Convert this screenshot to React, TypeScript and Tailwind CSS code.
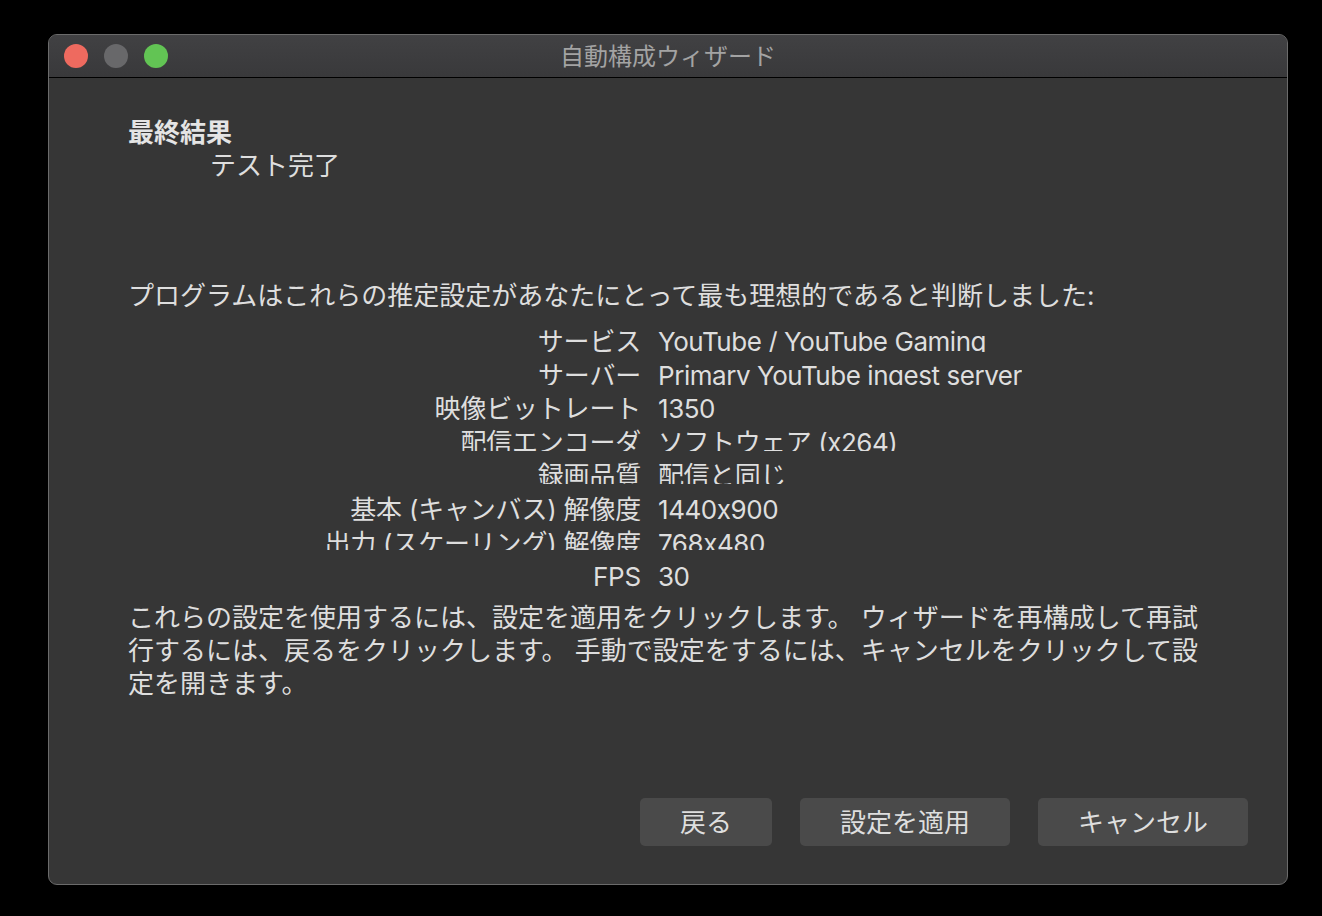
import React from "react";

const rows: { label: string; value: string; clip: number }[] = [
  { label: "サービス", value: "YouTube / YouTube Gaming", clip: 27 },
  { label: "サーバー", value: "Primary YouTube ingest server", clip: 26 },
  { label: "映像ビットレート", value: "1350", clip: 28 },
  { label: "配信エンコーダ", value: "ソフトウェア (x264)", clip: 25 },
  { label: "録画品質", value: "配信と同じ", clip: 25 },
  { label: "基本 (キャンバス) 解像度", value: "1440x900", clip: 28 },
  { label: "出力 (スケーリング) 解像度", value: "768x480", clip: 23 },
  { label: "FPS", value: "30", clip: 28 },
];

export default function App() {
  return (
    <div className="w-[1322px] h-[916px] bg-black pt-[34px] pl-[48px] font-[Inter,'Noto_Sans_CJK_JP',sans-serif] [font-feature-settings:'calt'_0]">
      <div className="w-[1240px] h-[851px] rounded-[9px] border border-[#6b6b6b] bg-[#363636] flex flex-col overflow-hidden">
        {/* Title bar */}
        <div className="h-[43px] shrink-0 grid grid-cols-[1fr_auto_1fr] items-center bg-gradient-to-b from-[#414143] to-[#39393b] border-b border-black">
          <div className="flex items-center gap-[16px] pl-[15px]">
            <div className="w-[24px] h-[24px] rounded-full bg-[#ee6a5f]" />
            <div className="w-[24px] h-[24px] rounded-full bg-[#68686a]" />
            <div className="w-[24px] h-[24px] rounded-full bg-[#62c454]" />
          </div>
          <div className="pt-[2px] text-[24px] leading-[32px] text-[#a3a3a3]">自動構成ウィザード</div>
          <div />
        </div>

        {/* Content */}
        <div className="flex-1 flex flex-col pl-[79px] pr-[39px] pt-[38px] pb-[38px] text-[26px] leading-[33px] text-[#dedede]">
          <div className="font-bold text-[#e4e4e4]">最終結果</div>
          <div className="pl-[82px]">テスト完了</div>

          <div className="mt-[97px]">プログラムはこれらの推定設定があなたにとって最も理想的であると判断しました:</div>

          <div className="mt-[13px] flex flex-col">
            {rows.map((r) => (
              <div key={r.label} className="h-[33.6px] flex">
                <div className="w-[513px] shrink-0 flex justify-end">
                  <div className="overflow-hidden leading-[34px] whitespace-nowrap tracking-[-0.2px]" style={{ height: r.clip }}>
                    {r.label}
                  </div>
                </div>
                <div className="pl-[17px]">
                  <div className="overflow-hidden leading-[34px] whitespace-nowrap tracking-[-0.45px]" style={{ height: r.clip }}>
                    {r.value}
                  </div>
                </div>
              </div>
            ))}
          </div>

          <div className="mt-[7px] whitespace-nowrap">
            <div>これらの設定を使用するには、設定を適用をクリックします。 ウィザードを再構成して再試</div>
            <div>行するには、戻るをクリックします。 手動で設定をするには、キャンセルをクリックして設</div>
            <div>定を開きます。</div>
          </div>

          <div className="flex-1" />

          <div className="flex justify-end gap-[28px]">
            <button className="w-[132px] h-[48px] rounded-[5px] bg-[#4a4a4a] text-[26px] text-[#dedede]">戻る</button>
            <button className="w-[210px] h-[48px] rounded-[5px] bg-[#4a4a4a] text-[26px] text-[#dedede]">設定を適用</button>
            <button className="w-[210px] h-[48px] rounded-[5px] bg-[#4a4a4a] text-[26px] text-[#dedede]">キャンセル</button>
          </div>
        </div>
      </div>
    </div>
  );
}
